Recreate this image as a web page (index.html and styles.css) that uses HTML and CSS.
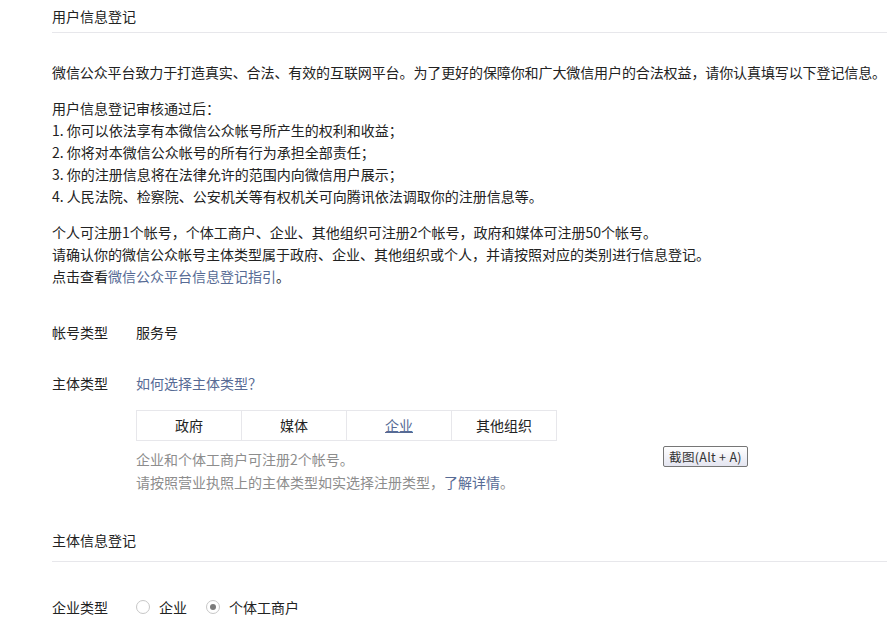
FILE: index.html
```html
<!DOCTYPE html>
<html lang="zh-CN">
<head>
  <meta charset="UTF-8" />
  <meta name="viewport" content="width=device-width, initial-scale=1.0" />
  <title>用户信息登记</title>
  <link rel="stylesheet" href="styles.css">
</head>
<body>

  <div class="page">
    <h3 class="section-title">用户信息登记</h3>

    <p class="intro intro-lead">微信公众平台致力于打造真实、合法、有效的互联网平台。为了更好的保障你和广大微信用户的合法权益，请你认真填写以下登记信息。</p>

    <p class="intro">
      用户信息登记审核通过后：<br>
      1. 你可以依法享有本微信公众帐号所产生的权利和收益；<br>
      2. 你将对本微信公众帐号的所有行为承担全部责任；<br>
      3. 你的注册信息将在法律允许的范围内向微信用户展示；<br>
      4. 人民法院、检察院、公安机关等有权机关可向腾讯依法调取你的注册信息等。
    </p>

    <p class="intro">
      个人可注册1个帐号，个体工商户、企业、其他组织可注册2个帐号，政府和媒体可注册50个帐号。<br>
      请确认你的微信公众帐号主体类型属于政府、企业、其他组织或个人，并请按照对应的类别进行信息登记。<br>
      点击查看<a href="#" class="link">微信公众平台信息登记指引</a>。
    </p>

    <div class="form-row first-row">
      <label class="form-label">帐号类型</label>
      <div class="form-value">服务号</div>
    </div>

    <div class="form-row">
      <label class="form-label">主体类型</label>
      <div class="form-value">
        <a href="#" class="link">如何选择主体类型？</a>
        <div class="type-tabs">
          <a href="#" class="type-tab">政府</a>
          <a href="#" class="type-tab">媒体</a>
          <a href="#" class="type-tab active">企业</a>
          <a href="#" class="type-tab">其他组织</a>
        </div>
        <p class="tips">企业和个体工商户可注册2个帐号。<br>请按照营业执照上的主体类型如实选择注册类型，<a href="#" class="link">了解详情</a>。</p>
      </div>
    </div>

    <h3 class="section-title second-title">主体信息登记</h3>

    <div class="form-row first-row">
      <label class="form-label">企业类型</label>
      <div class="form-value">
        <div class="radios">
          <label class="radio"><span class="radio-dot"></span>企业</label>
          <label class="radio"><span class="radio-dot checked"></span>个体工商户</label>
        </div>
        <p class="tips">个体工商户只能注册2个帐号。</p>
      </div>
    </div>
  </div>

  <div class="shot-tip">截图(Alt + A)</div>

</body>
</html>
```

FILE: styles.css
```css
html, body {
  overflow: hidden;
}

body {
  margin: 0;
  font-family: "Noto Sans CJK SC", "Liberation Sans", sans-serif;
  font-size: 14px;
  line-height: 22px;
  color: #222;
  background-color: #fff;
  text-spacing-trim: space-all;
}

.page {
  width: 900px;
  margin-left: 52px;
  padding-top: 5px;
}

.section-title {
  margin: 0;
  font-size: 14px;
  font-weight: normal;
  padding-bottom: 5px;
  border-bottom: 1px solid #e7e7eb;
}

.second-title {
  margin-top: 35px;
  padding-bottom: 10px;
}

.intro {
  margin: 14px 0 0;
}

.intro-lead {
  width: 835px;
  white-space: nowrap;
  letter-spacing: -0.1px;
}

.page > .section-title + .intro {
  margin-top: 28px;
}

.link {
  color: #576b95;
  text-decoration: none;
}

.form-row {
  display: flex;
  margin-top: 29px;
}

.first-row {
  margin-top: 34px;
}

.form-label {
  width: 84px;
  flex-shrink: 0;
}

.type-tabs {
  display: flex;
  width: 419px;
  margin-top: 16px;
  border: 1px solid #e7e7eb;
}

.type-tab {
  flex: 1;
  height: 29px;
  line-height: 29px;
  text-align: center;
  color: #222;
  text-decoration: none;
  border-left: 1px solid #e7e7eb;
}

.type-tab:first-child {
  border-left: none;
}

.type-tab.active {
  color: #576b95;
  text-decoration: underline;
}

.tips {
  margin: 7px 0 0;
  color: #8d8d8d;
  line-height: 23px;
}

.radios {
  display: flex;
  gap: 19px;
}

.radio {
  display: flex;
  align-items: center;
}

.radio-dot {
  width: 12px;
  height: 12px;
  border: 1px solid #c7c7c7;
  border-radius: 50%;
  margin-right: 9px;
  position: relative;
  background: #fff;
}

.radio-dot.checked::after {
  content: "";
  position: absolute;
  left: 3px;
  top: 3px;
  width: 6px;
  height: 6px;
  border-radius: 50%;
  background: #7a7a7a;
}

.shot-tip {
  position: absolute;
  left: 663px;
  top: 446px;
  width: 83px;
  height: 19px;
  line-height: 19px;
  font-size: 12.5px;
  letter-spacing: 0.3px;
  text-align: center;
  color: #333;
  border: 1px solid #767676;
  border-radius: 2px;
  background: linear-gradient(#ffffff, #e4e5f0);
}
```
